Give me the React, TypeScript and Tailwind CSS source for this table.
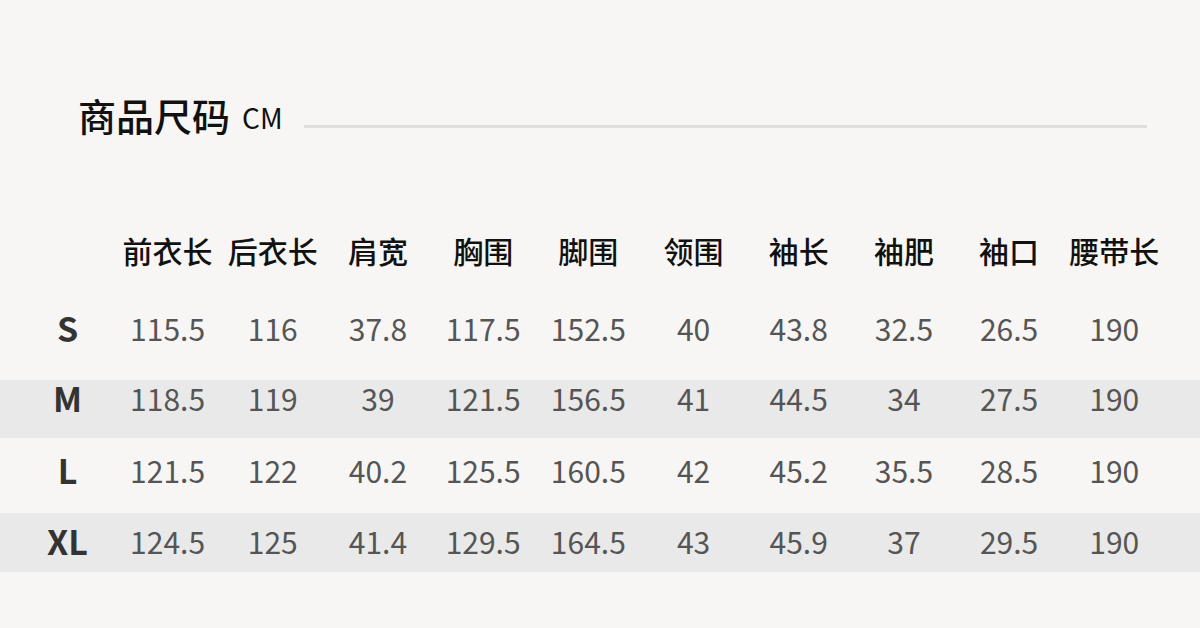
const headers = ['前衣长', '后衣长', '肩宽', '胸围', '脚围', '领围', '袖长', '袖肥', '袖口', '腰带长']

const rows = [
  { size: 'S', values: ['115.5', '116', '37.8', '117.5', '152.5', '40', '43.8', '32.5', '26.5', '190'], row: 'h-[76px] pt-[4px]', cell: '' },
  { size: 'M', values: ['118.5', '119', '39', '121.5', '156.5', '41', '44.5', '34', '27.5', '190'], row: 'h-[58px] bg-[#e9e9e9]', cell: '-mt-[2px]' },
  { size: 'L', values: ['121.5', '122', '40.2', '125.5', '160.5', '42', '45.2', '35.5', '28.5', '190'], row: 'h-[75px] pt-[12px]', cell: '' },
  { size: 'XL', values: ['124.5', '125', '41.4', '129.5', '164.5', '43', '45.9', '37', '29.5', '190'], row: 'h-[59px] pt-[8px] bg-[#e9e9e9]', cell: '' },
]

const grid = 'grid grid-cols-[95px_repeat(10,105.2px)] pl-[20px]'

export default function App() {
  return (
    <div
      className="w-[1200px] h-[628px] overflow-hidden bg-[#f7f6f4]"
      style={{ fontFamily: '"Noto Sans CJK SC", "Noto Sans", sans-serif' }}
    >
      {/* Title */}
      <div className="flex items-center pl-[78px] pr-[53px] pt-[91px]">
        <h1 className="text-[38px] leading-[44px] font-medium text-[#111]">商品尺码</h1>
        <span className="ml-[12px] mt-[4px] text-[28px] leading-[44px] text-[#111]">CM</span>
        <div className="flex-1 ml-[21px] mt-[23px] h-[3px] bg-[#dedede]" />
      </div>

      {/* Header row */}
      <div className={`${grid} mt-[87px] h-[78px] pt-[4px] items-start`}>
        <div />
        {headers.map((h) => (
          <div key={h} className="text-center text-[30px] leading-[40px] font-medium text-[#111] whitespace-nowrap">
            {h}
          </div>
        ))}
      </div>

      {/* Size rows */}
      {rows.map((r) => (
        <div key={r.size} className={`${grid} items-start ${r.row}`}>
          <div className={`text-center text-[34px] leading-[40px] font-semibold text-[#333] ${r.cell}`}>{r.size}</div>
          {r.values.map((v, i) => (
            <div key={i} className={`text-center text-[30px] leading-[40px] text-[#555] ${r.cell}`}>
              {v}
            </div>
          ))}
        </div>
      ))}
    </div>
  )
}
